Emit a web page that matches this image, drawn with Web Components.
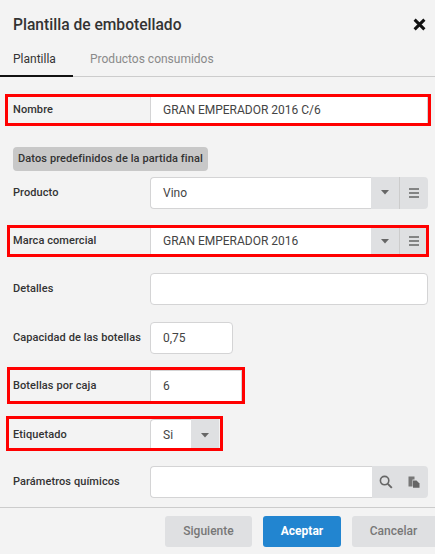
<!DOCTYPE html>
<html lang="es"><head><meta charset="utf-8"><title>Plantilla</title>
<style>
html,body{margin:0;padding:0;height:554px;overflow:hidden;background:#f3f3f3;font-family:Roboto,sans-serif;color:#333}
</style></head><body>
<x-dialog>
  <x-header slot="header" title-text="Plantilla de embotellado"></x-header>
  <x-tabs slot="tabs"></x-tabs>
  <x-field label="Nombre" value="GRAN EMPERADOR 2016 C/6" mark="nombre"></x-field>
  <x-section>Datos predefinidos de la partida final</x-section>
  <x-field label="Producto" value="Vino" addons="caret menu"></x-field>
  <x-field label="Marca comercial" value="GRAN EMPERADOR 2016" addons="caret menu" mark="marca"></x-field>
  <x-field label="Detalles"></x-field>
  <x-field label="Capacidad de las botellas" value="0,75" width="83"></x-field>
  <x-field label="Botellas por caja" value="6" width="92" mark="botellas" style="margin-bottom:17.6px"></x-field>
  <x-field label="Etiquetado" value="Si" width="69" addons="caret" mark="etiquetado" style="margin-bottom:14.8px"></x-field>
  <x-field label="Parámetros químicos" addons="search copy"></x-field>
  <x-footer slot="footer"></x-footer>
</x-dialog>
<script>
const ICONS={
 caret:'<svg width="10" height="5" viewBox="0 0 10 5"><path d="M1 0h8L5 4.6z" fill="#666"/></svg>',
 menu:'<svg width="12" height="10" viewBox="0 0 12 10"><path d="M1 1h10M1 5h10M1 9h10" stroke="#666" stroke-width="1.4" fill="none"/></svg>',
 search:'<svg width="14" height="14" viewBox="0 0 14 14"><circle cx="5.6" cy="5.6" r="4.2" fill="none" stroke="#666" stroke-width="1.6"/><path d="M8.8 8.8l4 4" stroke="#666" stroke-width="1.9" fill="none"/></svg>',
 copy:'<svg width="12" height="12" viewBox="0 0 12 12"><path d="M0.5 0.5h6v3h-2v7h-4z" fill="#777"/><path d="M5 4.5h3.5l3 3v4.2H5z" fill="#666"/></svg>'
};
/* top, left, bottom, width of each red overlay, relative to the row */
const MARKS={nombre:[0,5,0,426],marca:[0,7,0,422],botellas:[-3,7,-2,238],etiquetado:[-3,6,0,217]};
function def(n,c){customElements.define(n,c)}
function sh(el,html){el.attachShadow({mode:'open'}).innerHTML=html}
def('x-dialog',class extends HTMLElement{constructor(){super();sh(this,`<style>
:host{display:flex;flex-direction:column;width:435px;height:554px;box-sizing:border-box;background:#f3f3f3}
main{display:flex;flex-direction:column;flex:1;padding-top:17px;min-height:0}
</style><slot name="header"></slot><slot name="tabs"></slot><main><slot></slot></main><slot name="footer"></slot>`)}});
def('x-header',class extends HTMLElement{connectedCallback(){if(this.shadowRoot)return;sh(this,`<style>
:host{display:flex;align-items:center;justify-content:space-between;height:48px;padding:0 9px 0 13px;box-sizing:border-box;flex:none}
h1{margin:0;font:500 15.6px/20px Roboto,sans-serif;color:#333;padding-top:2px}
svg{display:block}
</style><h1>${this.getAttribute('title-text')}</h1><svg width="13" height="13" viewBox="0 0 13 13"><path d="M1.6 1.6l9.8 9.8M11.4 1.6l-9.8 9.8" stroke="#111" stroke-width="3" fill="none"/></svg>`)}});
def('x-tabs',class extends HTMLElement{constructor(){super();sh(this,`<style>
:host{display:flex;height:28px;border-bottom:1px solid #ccc;flex:none;box-sizing:content-box;font:400 12px/20px Roboto,sans-serif}
.t{padding-top:1px;box-sizing:border-box;height:29px}
.a{width:73px;padding-left:13px;color:#333;border-bottom:2px solid #111}
.i{margin-left:17px;color:#8a8a8a}
</style><div class="t a">Plantilla</div><div class="t i">Productos consumidos</div>`)}});
def('x-section',class extends HTMLElement{constructor(){super();sh(this,`<style>
:host{display:block;margin:4.8px 0 6px 13px;align-self:flex-start;background:#c8c8c8;border-radius:4px;padding:0 5px;font:500 11px/24px Roboto,sans-serif;color:#333;letter-spacing:.1px}
</style><slot></slot>`)}});
def('x-footer',class extends HTMLElement{constructor(){super();sh(this,`<style>
:host{display:flex;justify-content:flex-end;gap:11px;flex:none;height:47px;box-sizing:border-box;border-top:1px solid #ccc;padding-top:8px}
button{height:31px;border:0;border-radius:3px;background:#dfe0e2;color:#777;font:500 12px/31px Roboto,sans-serif;padding:0;cursor:pointer}
.s{width:87px}.p{width:78px;background:#2285d0;color:#fff;font-weight:700}.c{width:83px;border-radius:3px 0 0 3px}
</style><button class="s">Siguiente</button><button class="p">Aceptar</button><button class="c">Cancelar</button>`)}});
def('x-field',class extends HTMLElement{connectedCallback(){if(this.shadowRoot)return;
 const g=k=>this.getAttribute(k)||'';
 const ad=g('addons').split(' ').filter(Boolean);
 const m=MARKS[g('mark')];
 const flat=!!m;
 const wrapStyle=g('width')?`width:${g('width')}px`:'flex:1';
 sh(this,`<style>
:host{display:flex;align-items:center;position:relative;height:32px;padding:0 7px 0 13px;margin-bottom:16.2px;flex:none;font-family:Roboto,sans-serif}
label{width:137px;flex:none;font:500 11px/14px Roboto,sans-serif;color:#333;letter-spacing:.08px}
.w{display:flex;height:32px;box-sizing:border-box}
.v{flex:1;min-width:0;background:#fff;border:1px solid #d4d4d5;border-radius:4px;box-sizing:border-box;padding:0 12px;font:400 12px/30px Roboto,sans-serif;color:#444;white-space:nowrap}
.w.has .v{border-radius:4px 0 0 4px;border-right:0}
.a{display:flex;align-items:center;justify-content:center;width:28px;background:#dfe0e2;flex:none}
.a.menu{border-left:1px solid #ccc;width:28px}
.a:last-child{border-radius:0 4px 4px 0}
.mark{position:absolute;box-sizing:border-box;border:3px solid #f00;pointer-events:none}
.flat .v,.flat .a{border-radius:0}
</style><label>${g('label')}</label><div class="w ${ad.length?'has':''} ${flat?'flat':''}" style="${wrapStyle}"><div class="v">${g('value')}</div>${ad.map(a=>`<div class="a ${a}">${ICONS[a]}</div>`).join('')}</div>${m?`<div class="mark" style="top:${m[0]}px;left:${m[1]}px;bottom:${m[2]}px;width:${m[3]}px"></div>`:''}`);
}});
</script></body></html>
